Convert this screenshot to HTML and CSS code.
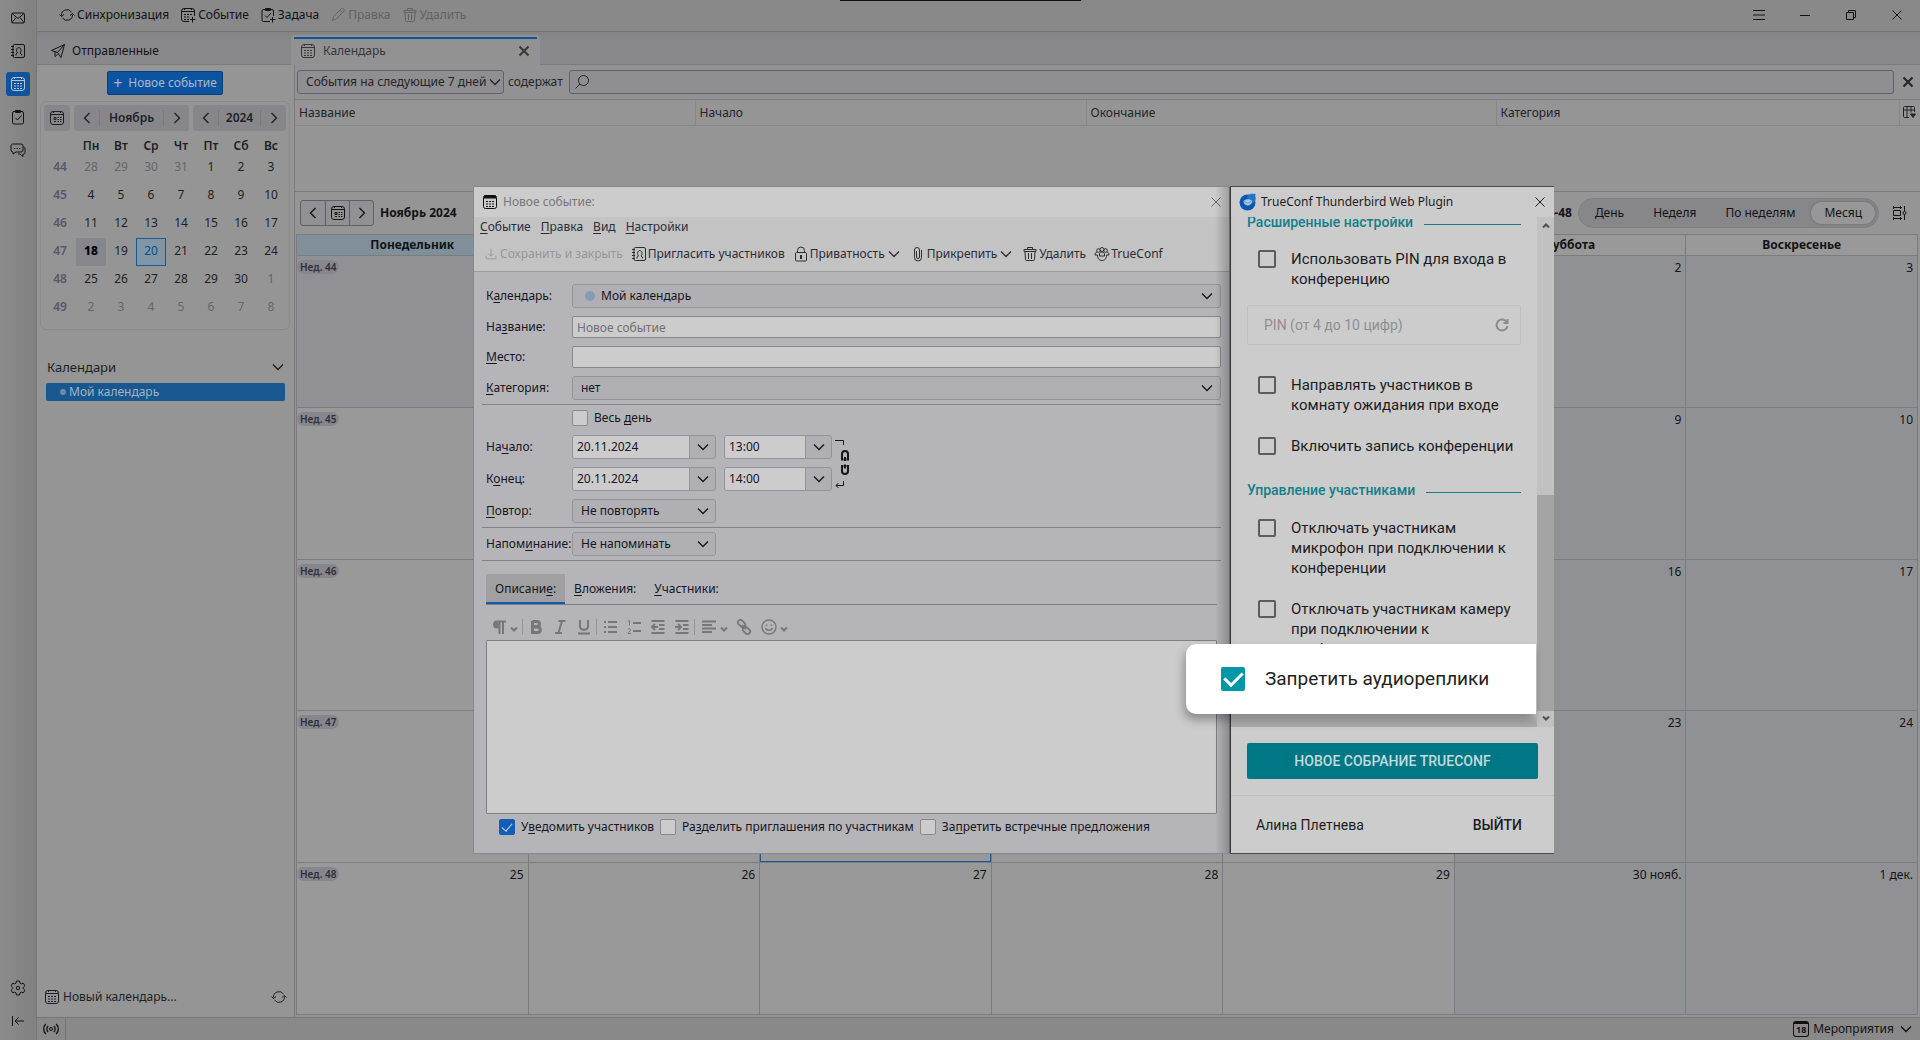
FILE: index.html
```html
<!DOCTYPE html>
<html lang="ru">
<head>
<meta charset="utf-8">
<title>Календарь</title>
<link rel="stylesheet" href="styles.css">
</head>
<body>
<svg class="sprite" aria-hidden="true">
  <symbol id="i-mail" viewBox="0 0 16 16"><rect x="1.5" y="3" width="13" height="10" rx="1.5"/><path d="M2 3.500l6 5 6-5M2 12.500l4-5M14 12.500l-4-5"/></symbol>
  <symbol id="i-book" viewBox="0 0 16 16"><rect x="3" y="1.500" width="11.500" height="13" rx="1.500"/><path d="M1 3.500h3M1 6.500h3M1 9.500h3M1 12.500h3M6 12.500v-1.500l1.500-1c-1-1-1-2.500-.8-3.500.3-2.500 3.900-2.500 4.200 0 .2 1 .1 2.500-.9 3.500l1.500 1v1.500"/></symbol>
  <symbol id="i-cal" viewBox="0 0 16 16"><rect x="1.500" y="1.500" width="13" height="13" rx="2.500"/><path d="M1.500 4.500h13M4.500 1v2M11.500 1v2"/><path stroke-dasharray="2 1" d="M4 7.500h9M4 10h9M4 12.500h9"/></symbol>
  <symbol id="i-today" viewBox="0 0 16 16"><rect x="1.500" y="1.500" width="13" height="13" rx="2.500"/><path d="M1.500 4.500h13M4.500 1v2M11.500 1v2M5 7.500h2v2h-2zM5 11.500h2"/><path stroke-dasharray="1.500 1" d="M8.500 7.500h4M8.500 9.500h4M8.500 11.500h4"/></symbol>
  <symbol id="i-calplus" viewBox="0 0 16 16"><path d="M9 14.500H4A2.500 2.500 0 0 1 1.500 12V4A2.500 2.500 0 0 1 4 1.500h8A2.500 2.500 0 0 1 14.500 4v5M1.500 4.500h13M4.500 1v2M11.500 1v2M12.500 10v5.500M10 12.500h5.500"/><path stroke-dasharray="2 1" d="M4 7.500h9M4 10h6M4 12.500h5"/></symbol>
  <symbol id="i-task" viewBox="0 0 16 16"><rect x="2.500" y="2.500" width="11" height="12.500" rx="1.500"/><path d="M5.500 1.500h5v2h-5zM5.500 9l2 2 4-4.500"/></symbol>
  <symbol id="i-taskplus" viewBox="0 0 16 16"><path d="M10 14.500H3.500a1.500 1.500 0 0 1-1.500-1.500V4a1.500 1.500 0 0 1 1.500-1.500h8.500A1.500 1.500 0 0 1 13.500 4v5M5.500 1.500h5v2h-5zM5 8.500l2 2 4-4.500M12.500 10v5.500M10 12.500h5.500"/></symbol>
  <symbol id="i-chat" viewBox="0 0 16 16"><path d="M3.500 2h7.500a2 2 0 0 1 2 2v4a2 2 0 0 1-2 2H6l-3 2v-2a2 2 0 0 1-2-2V4a2 2 0 0 1 2.500-2zM13.500 5c1 0 1.500.8 1.500 1.500v4a1.500 1.500 0 0 1-1.500 1.500h-.5v2.500l-3-2.500H8"/><path d="M4 6.500h1.200M6.500 6.500h1.200M9 6.500h1.200"/></symbol>
  <symbol id="i-gear" viewBox="0 0 16 16"><circle cx="8" cy="8" r="1.700"/><path d="M6.500 1h3l.5 2.100 1.300.8 2.100-.7 1.500 2.600-1.600 1.500v1.400l1.600 1.500-1.500 2.600-2.100-.7-1.300.8L9.500 15h-3L6 12.900l-1.300-.8-2.100.7-1.500-2.600 1.600-1.500V7.300L1.100 5.800l1.500-2.600 2.100.7L6 3.100z"/></symbol>
  <symbol id="i-collapse" viewBox="0 0 16 16"><path d="M2.500 3v10M14 8H5M8.500 4.500L5 8l3.500 3.500"/></symbol>
  <symbol id="i-sync" viewBox="0 0 16 16"><path d="M2.500 8.500a5.500 5.500 0 0 1 10-3.500M13.500 7.500a5.500 5.500 0 0 1-10 3.500M.5 7.500l2 2 2.500-2M11 8.500l2.500-2 2 2"/></symbol>
  <symbol id="i-pen" viewBox="0 0 16 16"><path d="M2.500 13.500l1-4 8-8c1.500-.5 3 .8 2.700 2.500l-8 8zM10 3l2.500 2.500"/></symbol>
  <symbol id="i-trash" viewBox="0 0 16 16"><path d="M2 3.500h12v2H2zM5.500 3.500V1.500h5v2M3 5.500l.5 8a1 1 0 0 0 1 1h7a1 1 0 0 0 1-1l.5-8M6.500 7v6M9.500 7v6"/></symbol>
  <symbol id="i-send" viewBox="0 0 16 16"><path d="M1.500 7.500l13-6-3.500 13-3.500-5zM7.500 9.500l7-8M5 9v4.500l2.500-2"/></symbol>
  <symbol id="i-x" viewBox="0 0 16 16"><path d="M3.500 3.500l9 9M12.500 3.500l-9 9"/></symbol>
  <symbol id="i-down" viewBox="0 0 16 16"><path stroke-width="1.300" d="M3 5.500l5 5 5-5"/></symbol>
  <symbol id="i-left" viewBox="0 0 16 16"><path stroke-width="1.300" d="M10.500 3l-5 5 5 5"/></symbol>
  <symbol id="i-right" viewBox="0 0 16 16"><path stroke-width="1.300" d="M5.500 3l5 5-5 5"/></symbol>
  <symbol id="i-search" viewBox="0 0 16 16"><circle cx="9.500" cy="6.500" r="5"/><path d="M6 10l-4.500 4.500"/></symbol>
  <symbol id="i-menu" viewBox="0 0 16 16"><path d="M2 3.500h12M2 8h12M2 12.500h12"/></symbol>
  <symbol id="i-min" viewBox="0 0 16 16"><path d="M3 8.500h10"/></symbol>
  <symbol id="i-restore" viewBox="0 0 16 16"><path d="M3.500 5.500h7v7h-7zM5.500 5.500v-2h7v7h-2"/></symbol>
  <symbol id="i-cols" viewBox="0 0 16 16"><path d="M8 13.500H3.500A1 1 0 0 1 2.500 12.500V3.500a1 1 0 0 1 1-1h9a1 1 0 0 1 1 1V8M2.500 6h11M6 2.500v11M10 2.500v6"/><path fill="currentColor" d="M9.500 10h5l-2.500 3.500z"/></symbol>
  <symbol id="i-density" viewBox="0 0 16 16"><path d="M2 2.500h9M2 13.500h9M2.500 5.500h7v5h-7zM2.500 1v3M9.500 1v3M2.500 12v3M9.500 12v3M13.500 1v5M13.500 10v5"/><circle cx="13.500" cy="8" r="1.500"/></symbol>
  <symbol id="i-radio" viewBox="0 0 16 16"><circle cx="8" cy="8" r="1.500"/><path stroke-width="1.300" d="M5.200 5a4 4 0 0 0 0 6M10.800 5a4 4 0 0 1 0 6M2.800 3a7 7 0 0 0 0 10M13.200 3a7 7 0 0 1 0 10"/></symbol>
  <symbol id="i-wincal" viewBox="0 0 16 16"><rect x="1.500" y="1.500" width="13" height="13" rx="2" fill="#ccc"/><path stroke-width="3" d="M2 3h12"/><path stroke-dasharray="2 1" d="M4 7.500h9M4 10h9M4 12.500h9"/></symbol>
  <symbol id="i-save" viewBox="0 0 16 16"><path d="M8 2v8M5 7.500l3 3 3-3M2.500 10v3.500h11V10"/></symbol>
  <symbol id="i-lock" viewBox="0 0 16 16"><rect x="2.500" y="6.500" width="11" height="8.500" rx="1"/><path d="M4.500 6.500v-2a3.500 3.500 0 0 1 7 0v2"/><path stroke-width="2" d="M8 9v4"/></symbol>
  <symbol id="i-clip" viewBox="0 0 16 16"><path d="M11.500 4v7.500a3.500 3.500 0 0 1-7 0V4a2.500 2.500 0 0 1 5 0v7a1.500 1.500 0 0 1-3 0V5"/></symbol>
  <symbol id="i-crowd" viewBox="0 0 16 16"><circle cx="8" cy="3.500" r="2"/><circle cx="4.500" cy="4.500" r="1.800"/><circle cx="11.500" cy="4.500" r="1.800"/><path d="M5.500 8c.5-2.500 4.500-2.500 5 0v2h-5zM3 6C1.500 6.500 1 7 1 9h2.500c0 4 2 5.500 4.500 5.500s4.500-1.500 4.500-5.500H15c0-2-.5-2.500-2-3"/></symbol>
  <symbol id="i-refresh" viewBox="0 0 16 16"><path d="M13 5.500A5.500 5.500 0 1 0 13.500 9M13.500 2v4h-4"/></symbol>
  <symbol id="i-para" viewBox="0 0 16 16"><path stroke-width="2" d="M15 2.500H6a3 3 0 0 0 0 6h1.500M8.500 2.500V15M12 2.500V15"/><circle cx="5.500" cy="5.500" r="2" fill="currentColor"/></symbol>
  <symbol id="i-bold" viewBox="0 0 16 16"><path stroke-width="3" d="M4.500 2.500h4.500c3.300 0 3.300 5 0 5H4.500M4.500 8h5c3.700 0 3.700 5.500 0 5.500H4.500zM4.500 2v12"/></symbol>
  <symbol id="i-italic" viewBox="0 0 16 16"><path stroke-width="2" d="M6.500 2h7M3 14h7M10 2L6.500 14"/></symbol>
  <symbol id="i-under" viewBox="0 0 16 16"><path stroke-width="2" d="M4 1v6c0 5 8 5 8 0V1M2 14.500h12"/></symbol>
  <symbol id="i-ul" viewBox="0 0 16 16"><path stroke-width="2" d="M6 3h9M6 8h9M6 13h9M2 3h2M2 8h2M2 13h2"/></symbol>
  <symbol id="i-ol" viewBox="0 0 16 16"><path stroke-width="2" d="M7 4h8M7 12h8"/><path d="M2 2.500l1.500-1v5M2 10.500c.5-1.500 2.800-1 2.500.5L2 14.500h3"/></symbol>
  <symbol id="i-outdent" viewBox="0 0 16 16"><path stroke-width="2" d="M1.500 2h13M9 6h5.500M9 10h5.500M1.500 14h13M8 8H2.500M5 5L2 8l3 3"/></symbol>
  <symbol id="i-indent" viewBox="0 0 16 16"><path stroke-width="2" d="M1.500 2h13M9 6h5.500M9 10h5.500M1.500 14h13M1 8h5.500M4 5l3 3-3 3"/></symbol>
  <symbol id="i-align" viewBox="0 0 16 16"><path stroke-width="2" d="M1 2.500h14M1 6h10M1 9.500h14M1 13h10"/></symbol>
  <symbol id="i-link" viewBox="0 0 16 16"><rect x="1.500" y="2" width="8" height="5" rx="2" stroke-width="1.800" transform="rotate(45 5.500 4.500)"/><rect x="6.500" y="9" width="8" height="5" rx="2" stroke-width="1.800" transform="rotate(45 10.500 11.500)"/><path stroke-width="1.800" d="M6 6l4 4"/></symbol>
  <symbol id="i-smile" viewBox="0 0 16 16"><circle cx="8" cy="8" r="7" stroke-width="1.400"/><path stroke-width="1.400" d="M4.500 9c1 3 6 3 7 0M5.500 5.500v1.500M10.500 5.500v1.500"/></symbol>
  <symbol id="i-bdown" viewBox="0 0 8 8"><path stroke-width="2" d="M1 2.500l3 3 3-3"/></symbol>
  <symbol id="i-bup" viewBox="0 0 8 8"><path stroke-width="2" d="M1 5.500l3-3 3 3"/></symbol>
</svg>

<div class="app">
  <nav class="spaces">
    <button class="space" aria-label="Почта"><svg class="icon"><use href="#i-mail"/></svg></button>
    <button class="space" aria-label="Адресная книга"><svg class="icon"><use href="#i-book"/></svg></button>
    <button class="space current" aria-label="Календарь"><svg class="icon"><use href="#i-cal"/></svg></button>
    <button class="space" aria-label="Задачи"><svg class="icon"><use href="#i-task"/></svg></button>
    <button class="space" aria-label="Чат"><svg class="icon"><use href="#i-chat"/></svg></button>
    <button class="space push" aria-label="Настройки"><svg class="icon"><use href="#i-gear"/></svg></button>
    <button class="space" aria-label="Свернуть"><svg class="icon"><use href="#i-collapse"/></svg></button>
  </nav>

  <div class="workspace">
    <header class="toolbar">
      <button class="tool"><svg class="icon"><use href="#i-sync"/></svg>Синхронизация</button>
      <button class="tool"><svg class="icon"><use href="#i-calplus"/></svg>Событие</button>
      <button class="tool"><svg class="icon"><use href="#i-taskplus"/></svg>Задача</button>
      <button class="tool off" disabled><svg class="icon"><use href="#i-pen"/></svg>Правка</button>
      <button class="tool off" disabled><svg class="icon"><use href="#i-trash"/></svg>Удалить</button>
      <div class="window-buttons">
        <button aria-label="Меню"><svg class="icon"><use href="#i-menu"/></svg></button>
        <button aria-label="Свернуть окно"><svg class="icon"><use href="#i-min"/></svg></button>
        <button aria-label="Восстановить"><svg class="icon"><use href="#i-restore"/></svg></button>
        <button aria-label="Закрыть окно"><svg class="icon"><use href="#i-x"/></svg></button>
      </div>
    </header>

    <div class="tabs">
      <button class="tab first"><svg class="icon"><use href="#i-send"/></svg>Отправленные</button>
      <div class="tab active"><svg class="icon"><use href="#i-cal"/></svg>Календарь
        <button class="tab-close" aria-label="Закрыть вкладку"><svg class="icon bold"><use href="#i-x"/></svg></button></div>
    </div>

    <div class="main">
      <aside class="sidebar">
        <button class="new-event"><span class="plus">+</span>Новое событие</button>
        <section class="minical">
          <div class="minical-head">
            <button class="mini-today" aria-label="Сегодня"><svg class="icon"><use href="#i-today"/></svg></button>
            <div class="stepper month"><button aria-label="Назад"><svg class="icon"><use href="#i-left"/></svg></button><b>Ноябрь</b><button aria-label="Вперёд"><svg class="icon"><use href="#i-right"/></svg></button></div>
            <div class="stepper year"><button aria-label="Назад"><svg class="icon"><use href="#i-left"/></svg></button><b>2024</b><button aria-label="Вперёд"><svg class="icon"><use href="#i-right"/></svg></button></div>
          </div>
          <table class="mini">
            <tr><td></td><th>Пн</th><th>Вт</th><th>Ср</th><th>Чт</th><th>Пт</th><th>Сб</th><th>Вс</th></tr>
            <tr><th>44</th><td class="o">28</td><td class="o">29</td><td class="o">30</td><td class="o">31</td><td>1</td><td>2</td><td>3</td></tr>
            <tr><th>45</th><td>4</td><td>5</td><td>6</td><td>7</td><td>8</td><td>9</td><td>10</td></tr>
            <tr><th>46</th><td>11</td><td>12</td><td>13</td><td>14</td><td>15</td><td>16</td><td>17</td></tr>
            <tr><th>47</th><td class="now">18</td><td>19</td><td class="picked">20</td><td>21</td><td>22</td><td>23</td><td>24</td></tr>
            <tr><th>48</th><td>25</td><td>26</td><td>27</td><td>28</td><td>29</td><td>30</td><td class="o">1</td></tr>
            <tr><th>49</th><td class="o">2</td><td class="o">3</td><td class="o">4</td><td class="o">5</td><td class="o">6</td><td class="o">7</td><td class="o">8</td></tr>
          </table>
        </section>
        <button class="cal-heading">Календари<svg class="icon"><use href="#i-down"/></svg></button>
        <button class="cal-item"><span class="cal-dot"></span>Мой календарь</button>
        <div class="sidebar-foot">
          <button class="new-cal"><svg class="icon"><use href="#i-cal"/></svg>Новый календарь...</button>
          <button aria-label="Обновить"><svg class="icon"><use href="#i-sync"/></svg></button>
        </div>
      </aside>

      <main class="content">
        <div class="filter">
          <div class="select range"><select id="range" aria-label="Период"><option>События на следующие 7 дней</option></select><svg class="icon"><use href="#i-down"/></svg></div>
          <label for="q">содержат</label>
          <div class="search"><svg class="icon"><use href="#i-search"/></svg><input id="q" type="text"></div>
          <button class="filter-close" aria-label="Закрыть"><svg class="icon bold"><use href="#i-x"/></svg></button>
        </div>
        <div class="list">
          <table>
            <tr><th class="c1">Название</th><th class="c2">Начало</th><th class="c3">Окончание</th><th>Категория</th><th class="c5"><svg class="icon"><use href="#i-cols"/></svg></th></tr>
          </table>
        </div>
        <div class="month-bar">
          <div class="nav-group">
            <button aria-label="Назад"><svg class="icon"><use href="#i-left"/></svg></button><button aria-label="Сегодня"><svg class="icon"><use href="#i-today"/></svg></button><button aria-label="Вперёд"><svg class="icon"><use href="#i-right"/></svg></button>
          </div>
          <b>Ноябрь 2024</b>
          <b class="weeks">Недели 44-48</b>
          <div class="views"><button>День</button><button>Неделя</button><button>По неделям</button><button class="chosen">Месяц</button></div>
          <button class="density" aria-label="Вид"><svg class="icon"><use href="#i-density"/></svg></button>
        </div>
        <div class="month-wrap">
          <table class="month">
            <thead><tr><th class="today">Понедельник</th><th>Вторник</th><th>Среда</th><th>Четверг</th><th>Пятница</th><th>Суббота</th><th>Воскресенье</th></tr></thead>
            <tbody>
              <tr><td class="out"><div><span class="wk">Нед. 44</span></div></td><td class="out"></td><td class="out"></td><td class="out"></td><td></td><td class="end"><div>2</div></td><td class="end"><div>3</div></td></tr>
              <tr><td><div><span class="wk">Нед. 45</span></div></td><td></td><td></td><td></td><td></td><td class="end"><div>9</div></td><td class="end"><div>10</div></td></tr>
              <tr><td><div><span class="wk">Нед. 46</span></div></td><td></td><td></td><td></td><td></td><td class="end"><div>16</div></td><td class="end"><div>17</div></td></tr>
              <tr><td><div><span class="wk">Нед. 47</span></div></td><td></td><td class="sel"></td><td></td><td></td><td class="end"><div>23</div></td><td class="end"><div>24</div></td></tr>
              <tr><td><div><span class="wk">Нед. 48</span>25</div></td><td><div>26</div></td><td><div>27</div></td><td><div>28</div></td><td><div>29</div></td><td class="end"><div>30 нояб.</div></td><td class="out"><div>1 дек.</div></td></tr>
            </tbody>
          </table>
        </div>
      </main>
    </div>

    <footer class="status">
      <button class="online" aria-label="В сети"><svg class="icon"><use href="#i-radio"/></svg></button>
      <button class="events"><span class="day-badge">18</span>Мероприятия<svg class="icon"><use href="#i-down"/></svg></button>
    </footer>
  </div>
</div>

<div class="top-strip"></div>

<form class="dialog">
  <div class="dialog-title"><svg class="icon"><use href="#i-wincal"/></svg>Новое событие:<button type="button" aria-label="Закрыть"><svg class="icon"><use href="#i-x"/></svg></button></div>
  <div class="dialog-head">
    <div class="menus"><button type="button"><u>С</u>обытие</button><button type="button"><u>П</u>равка</button><button type="button"><u>В</u>ид</button><button type="button"><u>Н</u>астройки</button></div>
    <div class="actions">
      <button type="button" class="off" disabled><svg class="icon small"><use href="#i-save"/></svg>Сохранить и закрыть</button>
      <button type="button"><svg class="icon"><use href="#i-book"/></svg>Пригласить участников</button>
      <button type="button"><svg class="icon"><use href="#i-lock"/></svg>Приватность<svg class="icon"><use href="#i-down"/></svg></button>
      <button type="button"><svg class="icon"><use href="#i-clip"/></svg>Прикрепить<svg class="icon"><use href="#i-down"/></svg></button>
      <button type="button"><svg class="icon"><use href="#i-trash"/></svg>Удалить</button>
      <button type="button"><svg class="icon"><use href="#i-crowd"/></svg>TrueConf</button>
    </div>
  </div>
  <div class="dialog-body">
    <div class="row"><label for="cal">К<u>а</u>лендарь:</label><div class="select wide"><select id="cal" class="with-dot"><option>Мой календарь</option></select><i class="dot"></i><svg class="icon"><use href="#i-down"/></svg></div></div>
    <div class="row"><label for="name">На<u>з</u>вание:</label><input id="name" class="field" type="text" placeholder="Новое событие"></div>
    <div class="row"><label for="place"><u>М</u>есто:</label><input id="place" class="field" type="text"></div>
    <div class="row"><label for="cat"><u>К</u>атегория:</label><div class="select wide"><select id="cat"><option>нет</option></select><svg class="icon"><use href="#i-down"/></svg></div></div>
    <hr>
    <div class="row indent"><label class="check"><input type="checkbox"><span>Весь <u>д</u>ень</span></label></div>
    <div class="times">
      <div class="time-rows">
        <div class="row"><label for="d1">На<u>ч</u>ало:</label><div class="combo date"><input id="d1" type="text" value="20.11.2024"><button type="button" aria-label="Выбрать дату"><svg class="icon"><use href="#i-down"/></svg></button></div><div class="combo time"><input type="text" aria-label="Время начала" value="13:00"><button type="button" aria-label="Выбрать время"><svg class="icon"><use href="#i-down"/></svg></button></div></div>
        <div class="row"><label for="d2">К<u>о</u>нец:</label><div class="combo date"><input id="d2" type="text" value="20.11.2024"><button type="button" aria-label="Выбрать дату"><svg class="icon"><use href="#i-down"/></svg></button></div><div class="combo time"><input type="text" aria-label="Время конца" value="14:00"><button type="button" aria-label="Выбрать время"><svg class="icon"><use href="#i-down"/></svg></button></div></div>
      </div>
      <svg class="chain" viewBox="0 0 16 50"><path d="M0 1.500h8.500V6M8.500 42v4.500H1M3.500 44L1 46.500 3.500 49"/><path stroke-width="2" d="M8.500 20.500h-1.500V15q0-3 3-3t3 3v5.500h-1.500M10 18v4M8.500 27h-1.500v5q0 3 3 3t3-3v-5h-1.500M10 25.500v4"/></svg>
    </div>
    <div class="row"><label for="rep"><u>П</u>овтор:</label><div class="select short"><select id="rep"><option>Не повторять</option></select><svg class="icon"><use href="#i-down"/></svg></div></div>
    <hr>
    <div class="row"><label for="rem">Напом<u>и</u>нание:</label><div class="select short"><select id="rem"><option>Не напоминать</option></select><svg class="icon"><use href="#i-down"/></svg></div></div>
    <hr>
    <div class="dtabs"><button type="button" class="on">Описани<u>е</u>:</button><button type="button"><u>В</u>ложения:</button><button type="button"><u>У</u>частники:</button></div>
    <div class="format">
      <button type="button" class="drop" aria-label="Абзац"><svg class="icon"><use href="#i-para"/></svg><svg class="tiny"><use href="#i-bdown"/></svg></button>
      <span class="bar"></span>
      <button type="button" aria-label="Полужирный"><svg class="icon"><use href="#i-bold"/></svg></button>
      <button type="button" aria-label="Курсив"><svg class="icon"><use href="#i-italic"/></svg></button>
      <button type="button" aria-label="Подчёркнутый"><svg class="icon"><use href="#i-under"/></svg></button>
      <span class="bar"></span>
      <button type="button" aria-label="Список"><svg class="icon"><use href="#i-ul"/></svg></button>
      <button type="button" aria-label="Нумерация"><svg class="icon"><use href="#i-ol"/></svg></button>
      <button type="button" aria-label="Уменьшить отступ"><svg class="icon"><use href="#i-outdent"/></svg></button>
      <button type="button" aria-label="Увеличить отступ"><svg class="icon"><use href="#i-indent"/></svg></button>
      <span class="bar"></span>
      <button type="button" class="drop" aria-label="Выравнивание"><svg class="icon"><use href="#i-align"/></svg><svg class="tiny"><use href="#i-bdown"/></svg></button>
      <button type="button" aria-label="Ссылка"><svg class="icon"><use href="#i-link"/></svg></button>
      <button type="button" class="drop" aria-label="Смайлик"><svg class="icon"><use href="#i-smile"/></svg><svg class="tiny"><use href="#i-bdown"/></svg></button>
    </div>
    <textarea aria-label="Описание"></textarea>
    <div class="options">
      <label class="check"><input type="checkbox" checked><span>У<u>в</u>едомить участников</span></label>
      <label class="check"><input type="checkbox"><span>Ра<u>з</u>делить приглашения по участникам</span></label>
      <label class="check"><input type="checkbox"><span>За<u>п</u>ретить встречные предложения</span></label>
    </div>
  </div>
</form>

<div class="plugin">
  <div class="plugin-title">
    <svg class="bird" viewBox="0 0 18 18"><circle cx="8.500" cy="9.500" r="8" fill="#0d56b0"/><path d="M8 3c3-3 6-2 9-2-2 1 .5 3-.5 6-1 3.500-4 4-6 3z" fill="#1f74cc"/><path d="M4.500 8c2-2.500 7-2.500 8.500 0 0 3-2.500 4.800-4.500 4.500-2.300-.4-4-2-4-4.500z" fill="#a9c4e2"/><path d="M5 8l4 2.500 3.500-2.500" fill="none" stroke="#6d9bd0"/></svg>
    TrueConf Thunderbird Web Plugin
    <button aria-label="Закрыть"><svg class="icon"><use href="#i-x"/></svg></button>
  </div>
  <div class="plugin-view">
    <div class="plugin-scroll">
      <h2>Расширенные настройки</h2>
      <label class="opt"><input type="checkbox"><span>Использовать PIN для входа в конференцию</span></label>
      <div class="pin"><input type="text" aria-label="PIN" placeholder="PIN (от 4 до 10 цифр)" disabled><svg class="icon"><use href="#i-refresh"/></svg></div>
      <label class="opt"><input type="checkbox"><span>Направлять участников в комнату ожидания при входе</span></label>
      <label class="opt"><input type="checkbox"><span>Включить запись конференции</span></label>
      <h2>Управление участниками</h2>
      <label class="opt"><input type="checkbox"><span>Отключать участникам микрофон при подключении к конференции</span></label>
      <label class="opt"><input type="checkbox"><span>Отключать участникам камеру при подключении к конференции</span></label>
    </div>
    <div class="scrollbar"><svg class="tiny"><use href="#i-bup"/></svg><div class="thumb"></div><svg class="tiny"><use href="#i-bdown"/></svg></div>
  </div>
  <div class="plugin-cta"><button>НОВОЕ СОБРАНИЕ TRUECONF</button></div>
  <div class="plugin-foot"><span>Алина Плетнева</span><button>ВЫЙТИ</button></div>
</div>

<label class="callout"><input type="checkbox" checked><span>Запретить аудиореплики</span></label>
</body>
</html>
```

FILE: styles.css
```css
* { box-sizing: border-box; }
body { margin: 0; position: relative; font: 12px/16px "Noto Sans", "Open Sans", sans-serif; color: #131316; background: #959595; overflow: hidden; }
button { font: inherit; color: inherit; background: none; border: 0; padding: 0; display: inline-flex; align-items: center; justify-content: center; }
input, select, textarea { font: inherit; color: inherit; margin: 0; min-width: 0; }
table { border-collapse: collapse; border-spacing: 0; }
u { text-underline-offset: 2px; }
.sprite { display: none; }
.icon { width: 16px; height: 16px; flex: none; fill: none; stroke: currentColor; stroke-width: 1; }
.icon.bold { stroke-width: 2; }
.icon.small { width: 14px; height: 14px; }
.tiny { width: 8px; height: 8px; flex: none; fill: none; stroke: currentColor; }

.app { display: grid; grid-template-columns: 37px 1fr; min-height: 100vh; }
.spaces { display: flex; flex-direction: column; align-items: center; gap: 9px; padding: 6px 0 7px; background: linear-gradient(90deg, #8c8c8c, #808080); border-right: 1px solid #777; }
.space { width: 24px; height: 24px; border-radius: 3px; }
.space.current { background: #11549c; color: #b4c4d8; }
.push { margin-top: auto; }
.workspace { display: flex; flex-direction: column; min-width: 0; }

.toolbar { display: flex; align-items: center; gap: 11px; height: 32px; padding: 0 15px 2px 22px; background: #89898a; border-bottom: 1px solid #737374; }
.tool { gap: 2px; }
.off { color: #626264; }
.window-buttons { display: flex; gap: 30px; margin-left: auto; }
.top-strip { position: absolute; top: 0; left: 840px; width: 241px; height: 1px; background: #120f18; }

.tabs { display: flex; height: 33px; background: linear-gradient(#838384, #89898b 10px); border-bottom: 1px solid #7b7b7c; }
.tab { display: flex; align-items: center; justify-content: flex-start; gap: 6px; padding-left: 13px; }
.tab.first { width: 254px; padding-top: 5px; }
.tab.active { width: 249px; height: 30px; margin-top: 3px; padding: 2px 8px 0 9px; gap: 7px; background: linear-gradient(#11549c, #11549c) 3px 2px / 243px 2px no-repeat #929293; border-radius: 4px 4px 0 0; color: #37373b; }
.tab-close { margin-left: auto; }

.main { flex: 1; display: flex; min-height: 0; }
.sidebar { width: 258px; flex: none; display: flex; flex-direction: column; padding: 6px 4px 12px 3px; border-right: 1px solid #7b7b7c; color: #1f1f23; }
.new-event { align-self: center; height: 24px; padding: 0 5px; gap: 6px; color: #a9b8cc; background: #0d54a0; border: 1px solid #0b3f7c; border-radius: 2px; }
.plus { font-size: 16px; }
.minical { margin-top: 6px; border: 1px solid #898989; border-radius: 6px; padding: 3px 3px 7px; }
.minical-head { display: flex; gap: 4px; }
.mini-today, .stepper { height: 26px; background: #87878b; border-radius: 3px; }
.mini-today { width: 26px; }
.stepper { display: flex; align-items: stretch; }
.stepper button { width: 25px; }
.stepper b { flex: 1; margin: 5px 0; text-align: center; border: solid #7a7a7e; border-width: 0 1px; font-weight: 600; }
.stepper.month { flex: none; width: 115px; }
.stepper.year { flex: 1; }
.mini { width: 100%; margin-top: 7px; table-layout: fixed; text-align: center; }
.mini td, .mini th { height: 28px; padding: 0 0 2px; font-weight: 400; }
.mini tr:first-child > * { height: 16px; font-weight: 600; padding: 0; }
.mini tr > :first-child { width: 32px; }
.mini tr:not(:first-child) th { color: #57576b; font-weight: 600; }
.mini .o { color: #66666a; }
.mini .now { background: #87868d; font-weight: 800; color: #000; }
.mini .picked { background: #8096a6; outline: 1px solid #175a96; outline-offset: -1px; color: #0f4c8c; }
.cal-heading { justify-content: space-between; margin-top: 27px; padding: 0 4px 0 7px; height: 20px; font-size: 13px; }
.cal-item { justify-content: flex-start; margin: 6px 5px 0 6px; height: 18px; padding-left: 14px; gap: 3px; color: #a3b3c4; background: #18588f; border-radius: 2px; }
.cal-dot { width: 6px; height: 6px; border-radius: 50%; background: #7089a5; }
.sidebar-foot { margin-top: auto; padding: 0 3px 0 4px; display: flex; justify-content: space-between; }
.new-cal { gap: 3px; }

.content { flex: 1; min-width: 0; display: flex; flex-direction: column; }
.filter { display: flex; align-items: center; height: 35px; padding: 0 4px 0 2px; background: #929294; border-bottom: 1px solid #7b7b7c; color: #242428; }
.select { display: grid; align-items: center; }
.select > * { grid-area: 1 / 1; }
.select select { appearance: none; width: 100%; height: 24px; padding: 0 24px 0 8px; border: 1px solid #94939a; border-radius: 3px; background: #b0afb4; }
.select .icon { justify-self: end; margin-right: 6px; pointer-events: none; }
.range { width: 207px; margin-right: 4px; }
.select.range select { padding-right: 16px; background: #8f8f92; border-color: #626266; }
.select.range .icon { margin-right: 1px; }
.search { flex: 1; display: flex; align-items: center; height: 24px; margin: 0 6px; padding-left: 4px; border: 1px solid #626266; border-radius: 3px; background: #8f8f92; }
.search input { flex: 1; height: 20px; border: 0; background: none; }
.list { height: 92px; border-bottom: 1px solid #7b7b7c; }
.list table { width: 100%; table-layout: fixed; }
.list th { height: 25px; padding: 1px 4px 0; text-align: left; font-weight: 400; border: solid #888; border-width: 0 1px 1px 0; color: #242428; }
.list .icon { display: block; }
.c1 { width: 400px; }
.c2 { width: 391px; }
.c3 { width: 410px; }
.list .c5 { width: 21px; padding: 0 3px 0 1px; border-right: 0; }

.month-bar { display: flex; align-items: center; height: 42px; padding: 0 13px 0 5px; }
.month-bar b { font-weight: 700; }
.nav-group { display: flex; border: 1px solid #606064; border-radius: 3px; margin-right: 6px; background: #919193; }
.nav-group button { width: 24px; height: 24px; }
.nav-group button + button { border-left: 1px solid #606064; }
.weeks { margin-left: auto; }
.views { display: flex; align-items: center; gap: 3px; height: 30px; margin: 0 12px 0 6px; padding: 0 3px; border-radius: 15px; background: #87878a; border: 1px solid #808084; }
.views button { padding: 0 13px; height: 22px; }
.views .chosen { background: #979798; border-radius: 11px; box-shadow: 0 0 3px #666; }
.month-wrap { flex: 1; display: grid; padding: 0 2px 2px 1px; }
table.month { width: 100%; height: 100%; min-height: 640px; table-layout: fixed; background: #999; }
.month th, .month td { border: 1px solid #7c7c7e; }
.month th { height: 21px; font-weight: 700; padding: 0; }
.month th.today { background: #80909b; }
.month td { vertical-align: top; padding: 4px 4px 0 0; }
.month td div { display: flex; justify-content: flex-end; line-height: 16px; }
.month .out { background: #919095; }
.month .end { background: #909195; }
.month .sel { box-shadow: inset 0 0 0 1px #175a96; }
.wk { margin-right: auto; padding: 0 3px; font-size: 10px; line-height: 14px; height: 14px; font-weight: 600; color: #2e2e36; background: #86868f; border-radius: 7px; }
.status { height: 23px; display: flex; align-items: center; justify-content: space-between; padding-right: 6px; background: #89898a; border-top: 1px solid #757576; }
.online { width: 29px; height: 22px; border-right: 1px solid #757576; }
.events { gap: 4px; }
.day-badge { width: 16px; height: 16px; border: 1px solid #111; border-top-width: 3px; border-radius: 3px; font: 700 9px/12px "Noto Sans", sans-serif; text-align: center; }

.dialog { position: absolute; left: 473px; top: 186px; width: 757px; height: 668px; border: 1px solid #88888a; background: #b5b4b9; display: flex; flex-direction: column; color: #16161c; }
.dialog-title { display: flex; align-items: center; height: 30px; padding: 0 5px 0 8px; gap: 5px; background: #ccc; color: #77777a; }
.dialog-title .icon { color: #111; }
.dialog-title button { margin-left: auto; }
.dialog-title button .icon { color: #666; }
.dialog-head { height: 55px; background: #c3c3c4; border-bottom: 1px solid #9b9b9e; color: #2c2c34; }
.menus { display: flex; gap: 10px; padding: 2px 6px 0; }
.actions { display: flex; gap: 8px; padding: 11px 10px 0; white-space: nowrap; }
.actions button { gap: 1px; }
.actions .off { color: #96969a; gap: 2px; }
.dialog-body { flex: 1; display: flex; flex-direction: column; padding: 12px 8px 0; }
.row { display: flex; align-items: center; margin: 0 0 8px 4px; }
.row > label:first-child { width: 86px; flex: none; white-space: nowrap; }
.row.indent { margin: 1px 0 9px 90px; }
.row.indent > label:first-child { width: auto; }
.wide { flex: 1; }
.short { width: 144px; }
.short .icon { margin-right: 5px; }
.select .with-dot { padding-left: 28px; }
.dot { width: 10px; height: 10px; margin-left: 13px; border-radius: 50%; background: #869dba; }
.field { flex: 1; height: 22px; padding: 0 4px; background: #ccc; border: 1px solid #88888b; border-radius: 2px; }
::placeholder { color: #6f6f74; opacity: 1; }
hr { width: 100%; height: 1px; margin: -4px 0 4px; border: 0; background: #828287; }
.check { display: flex; align-items: center; gap: 6px; }
.check input { appearance: none; width: 16px; height: 16px; background: #ccc; border: 1px solid #8a8a8e; border-radius: 2px; }
.check input:checked { border-color: #125db5; background: #125db5; display: grid; place-items: center; }
.check input:checked::after { content: ""; width: 5px; height: 9px; margin-bottom: 2px; border: solid #ccd8e8; border-width: 0 1px 1px 0; transform: rotate(40deg); }
.times { display: flex; gap: 3px; }
.chain { width: 16px; height: 50px; margin-top: 4px; fill: none; stroke: #16161a; }
.combo { display: flex; height: 24px; border: 1px solid #94939a; border-radius: 3px; background: #b0afb4; overflow: hidden; }
.combo input { flex: 1; padding: 0 4px; border: 0; border-right: 1px solid #94939a; background: #ccc; }
.combo button { width: 25px; }
.date { width: 144px; margin-right: 8px; }
.time { width: 108px; }
.dtabs { display: flex; height: 31px; margin: 9px 4px 10px; border-bottom: 1px solid #7d7d82; }
.dtabs button { padding: 0 9px; }
.dtabs .on { background: #a0a0a2; border-bottom: 2px solid #1259ad; padding-top: 2px; }
.format { display: flex; align-items: center; height: 24px; margin: 0 4px 1px; color: #77777b; }
.format button { width: 24px; height: 24px; }
.format .drop { width: 36px; gap: 3px; }
.format .drop .tiny { margin-top: 3px; }
.bar { width: 1px; height: 16px; margin-right: 1px; background: #949499; }
textarea { margin: 0 4px; height: 174px; resize: none; background: #ccc; border: 1px solid #7f7f84; border-radius: 1px; }
.options { display: flex; gap: 6px; padding: 5px 17px 0; }

.plugin { position: absolute; left: 1230px; top: 186px; width: 324px; height: 668px; display: flex; flex-direction: column; background: #ccc; border: solid #4a4a4c; border-width: 1px 0 1px 1px; font-family: Roboto, sans-serif; font-size: 14px; line-height: 20px; color: #1d1d1f; }
.plugin::before { content: ""; position: absolute; right: 100%; top: 0; bottom: 0; width: 16px; background: linear-gradient(90deg, transparent, rgba(0,0,0,.25)); }
.plugin-title { display: flex; align-items: center; gap: 4px; height: 30px; padding: 0 6px 0 8px; font: 12px/16px "Noto Sans", sans-serif; }
.plugin-title button { margin-left: auto; }
.bird { width: 18px; height: 18px; }
.plugin-view { display: flex; height: 510px; overflow: hidden; box-shadow: inset 0 -14px 8px -4px #aaa; }
.plugin-scroll { flex: 1; padding: 0 16px; }
.plugin h2 { display: flex; align-items: center; gap: 11px; margin: 0 0 18px; font: 500 14px/20px Roboto, sans-serif; color: #127f8a; white-space: nowrap; }
.plugin h2:first-child { height: 10px; margin-bottom: 22px; }
.plugin h2::after { content: ""; flex: 1; height: 1px; margin-top: 4px; background: #127f8a; }
.opt { display: flex; gap: 15px; padding-left: 11px; margin-bottom: 21px; font-size: 15px; align-items: flex-start; }
.opt + h2 { margin-top: 24px; }
.opt input { appearance: none; flex: none; width: 18px; height: 18px; margin-top: 1px; border: 2px solid #5c5c5c; border-radius: 2px; }
.pin { display: flex; align-items: center; height: 40px; margin: -5px 0 30px; padding: 0 10px 0 16px; border: 1px solid #c0c0c0; border-radius: 2px; color: #8c8c8c; }
.pin input { flex: 1; border: 0; background: none; padding: 0; }
.pin ::placeholder { color: #8f8f8f; }
.pin .icon { stroke-width: 2; }
.scrollbar { width: 17px; flex: none; display: flex; flex-direction: column; align-items: center; padding: 5px 0; background: #c1c1c1; color: #505050; }
.thumb { width: 17px; height: 216px; margin: auto 0 3px; background: #a4a4a4; }
.plugin-cta { padding: 16px; border-bottom: 1px solid #bdbdbd; }
.plugin-cta button { width: 100%; height: 36px; background: #007784; color: #c6dadc; border-radius: 2px; font: 500 14px/20px Roboto, sans-serif; }
.plugin-foot { flex: 1; display: flex; justify-content: space-between; align-items: center; padding: 0 32px 0 25px; }
.plugin-foot button { font-weight: 500; }

.callout { position: absolute; left: 1186px; top: 644px; width: 350px; height: 70px; display: flex; align-items: center; gap: 20px; padding-left: 35px; background: #fff; border-radius: 10px 0 0 10px; box-shadow: -2px 6px 10px rgba(0,0,0,.3); font: 19px/24px Roboto, sans-serif; color: #222; }
.callout input { appearance: none; width: 24px; height: 24px; border-radius: 2px; background: #0097a7; display: grid; place-items: center; }
.callout input::after { content: ""; width: 8px; height: 15px; margin-bottom: 4px; border: solid #fff; border-width: 0 3px 3px 0; transform: rotate(45deg); }
```
